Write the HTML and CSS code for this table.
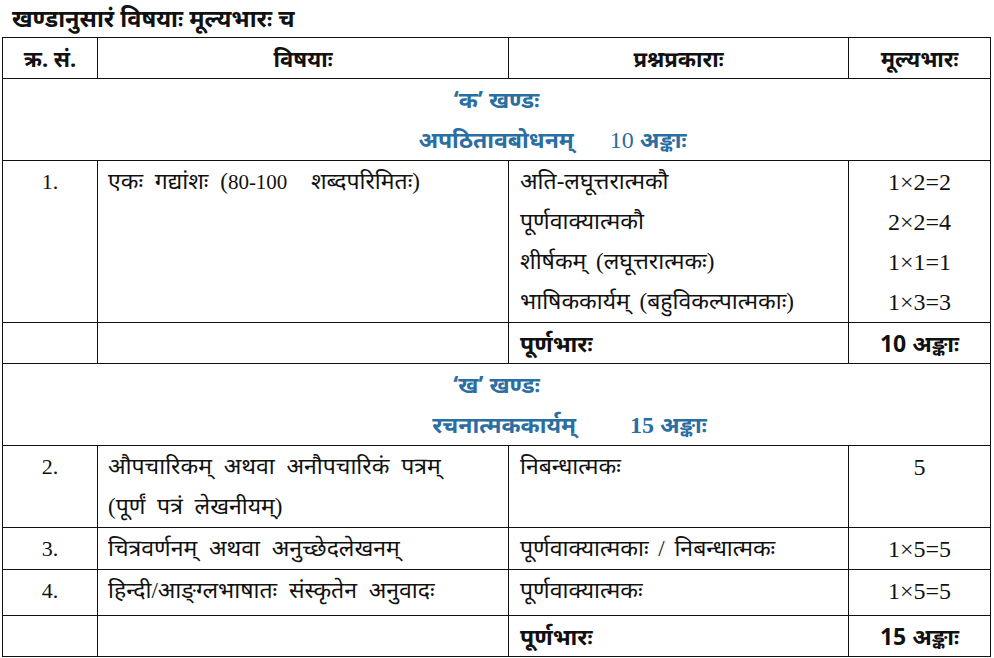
FILE: index.html
```html
<!DOCTYPE html>
<html lang="sa">
<head>
<meta charset="utf-8">
<title>खण्डानुसारं विषयाः मूल्यभारः च</title>
<link rel="stylesheet" href="styles.css">
</head>
<body>
<h1 class="title">खण्डानुसारं विषयाः मूल्यभारः च</h1>
<table class="grid">
  <colgroup>
    <col class="c1"><col class="c2"><col class="c3"><col class="c4">
  </colgroup>
  <thead>
    <tr class="head">
      <th>क्र. सं.</th>
      <th>विषयाः</th>
      <th>प्रश्नप्रकाराः</th>
      <th>मूल्यभारः</th>
    </tr>
  </thead>
  <tbody>
    <tr class="section">
      <td colspan="4">
        <div class="sec-line">‘क’ खण्डः</div>
        <div class="sec-line sec-k">अपठितावबोधनम्<span class="gap"></span><span class="sec-num">10</span> अङ्काः</div>
      </td>
    </tr>
    <tr class="row r1">
      <td class="num">1.</td>
      <td class="subj">एकः गद्यांशः (<span class="n">80-100</span>&nbsp;&nbsp;शब्दपरिमितः)</td>
      <td class="type">
        <div>अति-लघूत्तरात्मकौ</div>
        <div>पूर्णवाक्यात्मकौ</div>
        <div>शीर्षकम् (लघूत्तरात्मकः)</div>
        <div>भाषिककार्यम् (बहुविकल्पात्मकाः)</div>
      </td>
      <td class="marks">
        <div>1×2=2</div>
        <div>2×2=4</div>
        <div>1×1=1</div>
        <div>1×3=3</div>
      </td>
    </tr>
    <tr class="row total">
      <td></td>
      <td></td>
      <td class="type strong">पूर्णभारः</td>
      <td class="marks strong">10 अङ्काः</td>
    </tr>
    <tr class="section">
      <td colspan="4">
        <div class="sec-line">‘ख’ खण्डः</div>
        <div class="sec-line sec-kh">रचनात्मककार्यम्<span class="gap wide"></span><span class="sec-num bold">15</span> अङ्काः</div>
      </td>
    </tr>
    <tr class="row r2">
      <td class="num">2.</td>
      <td class="subj">
        <div>औपचारिकम् अथवा अनौपचारिकं पत्रम्</div>
        <div>(पूर्णं पत्रं लेखनीयम्)</div>
      </td>
      <td class="type">निबन्धात्मकः</td>
      <td class="marks">5</td>
    </tr>
    <tr class="row r3">
      <td class="num">3.</td>
      <td class="subj">चित्रवर्णनम् अथवा अनुच्छेदलेखनम्</td>
      <td class="type">पूर्णवाक्यात्मकाः / निबन्धात्मकः</td>
      <td class="marks">1×5=5</td>
    </tr>
    <tr class="row r4">
      <td class="num">4.</td>
      <td class="subj">हिन्दी/आङ्ग्लभाषातः संस्कृतेन अनुवादः</td>
      <td class="type">पूर्णवाक्यात्मकः</td>
      <td class="marks">1×5=5</td>
    </tr>
    <tr class="row total last">
      <td></td>
      <td></td>
      <td class="type strong">पूर्णभारः</td>
      <td class="marks strong">15 अङ्काः</td>
    </tr>
  </tbody>
</table>
</body>
</html>
```

FILE: styles.css
```css
html, body {
  margin: 0;
  padding: 0;
  background: #ffffff;
}
body {
  font-family: "Liberation Serif", "Noto Sans Devanagari", serif;
  color: #111111;
  width: 994px;
  height: 658px;
  overflow: hidden;
}
.title {
  margin: 0;
  padding: 3px 0 0 12px;
  height: 37px;
  box-sizing: border-box;
  font-family: "Noto Sans", "Noto Sans Devanagari", sans-serif;
  font-size: 23.5px;
  font-weight: bold;
  line-height: 30px;
}
.grid {
  margin-left: 2px;
  width: 988px;
  border-collapse: collapse;
  table-layout: fixed;
}
.c1 { width: 95px; }
.c2 { width: 411px; }
.c3 { width: 340px; }
.c4 { width: 142px; }
.grid th, .grid td {
  border: 1.5px solid #111111;
  padding: 0;
  vertical-align: top;
  font-size: 23px;
  line-height: 40px;
}
.head th {
  height: 39px;
  font-family: "Noto Sans", "Noto Sans Devanagari", sans-serif;
  font-weight: bold;
  font-size: 22px;
  text-align: center;
  vertical-align: middle;
}
.section td {
  height: 80px;
  text-align: center;
  color: #2b6ea2;
  font-family: "Noto Sans", "Noto Sans Devanagari", sans-serif;
  font-weight: bold;
  font-size: 23px;
}
.sec-line {
  line-height: 40px;
}
.sec-k {
  padding-left: 112px;
}
.sec-kh {
  padding-left: 146px;
}
.sec-num {
  font-family: "Liberation Serif", serif;
  font-weight: normal;
  font-size: 24px;
}
.sec-num.bold {
  font-weight: bold;
}
.gap {
  display: inline-block;
  width: 36px;
}
.gap.wide {
  width: 54px;
}
.row td {
  padding-top: 1px;
}
.num {
  text-align: center;
  font-size: 22px !important;
}
.subj {
  padding-left: 10px !important;
  word-spacing: 6px;
}
.n {
  font-size: 21px;
  word-spacing: 0;
}
.type {
  padding-left: 11px !important;
  word-spacing: 4px;
}
.marks {
  text-align: center;
  font-size: 24px !important;
}
.strong {
  font-family: "Noto Sans", "Noto Sans Devanagari", sans-serif;
  font-weight: bold;
  font-size: 23px !important;
}
.r1 td { height: 160px; }
.total td { height: 40px; vertical-align: middle; padding-top: 0; }
.r2 td { height: 79px; }
.r3 td { height: 40px; }
.r4 td { height: 44px; }
.last td { height: 40px; }
```
